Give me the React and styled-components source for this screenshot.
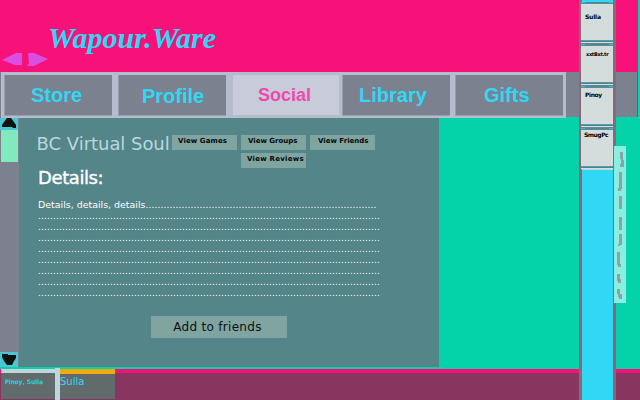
import React from "react";
import styled, { createGlobalStyle } from "styled-components";

const Global = createGlobalStyle`
  * { box-sizing: border-box; }
  body { margin: 0; background: #04d3aa; }
`;

const Screen = styled.div`
  position: relative;
  display: flex;
  flex-direction: column;
  width: 640px;
  height: 400px;
  overflow: hidden;
  background: #04d3aa;
  font-family: "DejaVu Sans", sans-serif;
  white-space: nowrap;
`;

const Header = styled.header`
  height: 72px;
  width: 638px;
  display: flex;
  align-items: flex-start;
  background: #f7127a;
`;

const Arrows = styled.svg`
  flex: none;
  width: 48px;
  height: 14px;
  margin-top: 52px;
`;

const Brand = styled.h1`
  margin: 21px 0 0;
  font: italic bold 30px/33px "Liberation Serif", serif;
  color: #31d8f5;
`;

const NavRow = styled.div`
  flex: none;
  display: flex;
  align-items: flex-start;
  height: 46px;
  padding-left: 1px;
  background: linear-gradient(90deg, #7b818f 1px, #04d3aa 1px);
`;

const Nav = styled.nav`
  width: 565px;
  height: 46px;
  padding: 3px 3px 2px;
  display: flex;
  background: #b4bcce;
`;

const NavEnd = styled.div`
  width: 72px;
  height: 45px;
  background: #7b818f;
  border-right: 1px solid #f7127a;
`;

const Tab = styled.a`
  flex: none;
  width: ${(p) => p.$w}px;
  height: ${(p) => (p.$active ? 40 : 41)}px;
  margin-right: ${(p) => p.$gap}px;
  padding: ${(p) => p.$top}px 0 0 ${(p) => p.$left}px;
  font: bold ${(p) => (p.$active ? 18 : 20)}px/22px "Liberation Sans", sans-serif;
  color: ${(p) => (p.$active ? "#f04aae" : "#31d8f5")};
  background: ${(p) => (p.$active ? "#c8ccda" : "#7b818f")};
  border: solid #979dac;
  border-width: ${(p) => (p.$active ? "0" : "0 0 1px 1px")};
`;

const Main = styled.main`
  flex: none;
  display: flex;
  height: 251px;
`;

const Scrollbar = styled.div`
  width: 19px;
  height: 249px;
  display: flex;
  flex-direction: column;
  justify-content: space-between;
  background: #7b818f;
`;

const ScrollButton = styled.svg`
  display: block;
  width: 18px;
  height: ${(p) => p.$h}px;
  background: #4ac6d2;
`;

const Thumb = styled.div`
  width: 17px;
  height: 32px;
  margin-left: 1px;
  background: #82e8bd;
`;

const Panel = styled.section`
  width: 420px;
  height: 249px;
  padding-left: 17px;
  background: #548588;
`;

const ProfileHead = styled.div`
  display: flex;
  height: 46px;
`;

const Name = styled.h2`
  width: 136px;
  margin: 15px 0 0;
  padding-left: 0.6px;
  font-size: 18px;
  line-height: 22px;
  font-weight: normal;
  letter-spacing: -0.04px;
  color: #b8d8df;
`;

const Actions = styled.div`
  display: grid;
  grid-template-columns: repeat(3, 65px);
  grid-auto-rows: 15px;
  gap: 3px 4px;
  padding-top: 17px;
`;

const Action = styled.button`
  grid-column: ${(p) => p.$col};
  padding: 0 0 2px ${(p) => p.$left}px;
  border: 0;
  background: #80a4a0;
  color: #050808;
  font: bold 7px/13px "DejaVu Sans", sans-serif;
  letter-spacing: ${(p) => p.$ls}px;
  text-align: left;
`;

const Heading = styled.h3`
  margin: 3px 0 0 2px;
  font-size: 18px;
  line-height: 22px;
  font-weight: normal;
  letter-spacing: -0.4px;
  -webkit-text-stroke: 0.4px #fff;
  color: #fff;
`;

const Details = styled.div`
  margin: 10px 0 0 2px;
  font-size: 9.43px;
  line-height: 11px;
  color: #fff;
`;

const Line = styled.div`
  height: 11px;
`;

const Dots = styled.span`
  font-size: 9px;
  letter-spacing: 0.139px;
`;

const AddButton = styled.button`
  display: block;
  width: 136px;
  height: 22px;
  margin: 18px 0 0 115px;
  padding: 0 3px 0 0;
  border: 0;
  background: #80a4a0;
  color: #0c1212;
  font: 12px/22px "DejaVu Sans", sans-serif;
  letter-spacing: 0.3px;
`;

const Taskbar = styled.footer`
  flex: none;
  display: flex;
  height: 31px;
  padding-left: 1px;
  background: linear-gradient(#f7127a 4px, #88355f 4px);
`;

const Task = styled.div`
  width: ${(p) => p.$w}px;
  height: 30px;
  padding-left: ${(p) => p.$left}px;
  border-top: ${(p) => p.$bar}px solid ${(p) => p.$color};
  background: #616b6b;
  color: #31d8f5;
  font-size: ${(p) => p.$size}px;
  line-height: ${(p) => p.$lh}px;
  letter-spacing: ${(p) => p.$ls}px;
  -webkit-text-stroke: ${(p) => p.$stroke}px #31d8f5;
`;

const Divider = styled.div`
  width: 5px;
  height: 32px;
  margin-top: -1px;
  background: #bdd5dc;
`;

const FriendRail = styled.aside`
  position: absolute;
  top: 0;
  left: 579px;
  width: 37px;
  height: 400px;
  padding-top: 2px;
  background: #31d8f5;
  border: solid #87697a;
  border-width: 0 3px 0 3px;
`;

const Friend = styled.div`
  height: 42px;
  margin-left: -1px;
  padding: ${(p) => p.$top}px 0 0 ${(p) => p.$left}px;
  font: bold ${(p) => p.$size}px/8px "DejaVu Sans", sans-serif;
  letter-spacing: ${(p) => p.$ls}px;
  color: #000;
  background:
    linear-gradient(#607f8c, #607f8c) 4px 0 / 24px 1px no-repeat,
    linear-gradient(
      #35bfd8 1px, #4f929f 1px 2px, #d4dddb 2px 38px, #38a9bd 38px 39px,
      #6f767f 39px 40px, #d4dddb 40px 41px, #5d8b98 41px
    );
`;

const RailEnd = styled.div`
  height: 1px;
  margin-top: -1px;
  background: #b9d9de;
`;

const SideTab = styled.svg`
  position: absolute;
  top: 146px;
  left: 614px;
  width: 12px;
  height: 157px;
  background: #8aeee2;
`;

const tabs = [
  { label: "Store", w: 108, gap: 6, left: 26, top: 9 },
  { label: "Profile", w: 108, gap: 7, left: 23, top: 10 },
  { label: "Social", w: 106, gap: 3, left: 25, top: 9, active: true },
  { label: "Library", w: 108, gap: 5, left: 16, top: 9 },
  { label: "Gifts", w: 108, gap: 0, left: 28, top: 9 },
];

const actions = [
  { label: "View Games", col: 1, left: 6, ls: 0.1 },
  { label: "View Groups", col: 2, left: 7, ls: 0 },
  { label: "View Friends", col: 3, left: 8, ls: 0 },
  { label: "View Reviews", col: 2, left: 6, ls: 0.25 },
];

const friends = [
  { name: "Sulla", size: 6, ls: -0.2, left: 4, top: 11 },
  { name: "xxtBxt.tr", size: 5, ls: -0.3, left: 5, top: 6 },
  { name: "Pinoy", size: 6, ls: -0.4, left: 4, top: 5 },
  { name: "SmugPc", size: 6, ls: -0.5, left: 3, top: 3 },
];

export default function App() {
  return (
    <Screen>
      <Global />
      <Header>
        <Arrows viewBox="0 0 48 14" fill="#d84fe2">
          <path d="M2 8 16 1h6v12H15Z" />
          <path d="M28 1h6l14 6-14 7h-7l2-3Z" />
        </Arrows>
        <Brand>Wapour.Ware</Brand>
      </Header>
      <NavRow>
        <Nav>
          {tabs.map((t) => (
            <Tab key={t.label} $w={t.w} $gap={t.gap} $left={t.left} $top={t.top} $active={t.active}>
              {t.label}
            </Tab>
          ))}
        </Nav>
        <NavEnd />
      </NavRow>
      <Main>
        <Scrollbar>
          <div>
            <ScrollButton $h={12} viewBox="0 0 18 12">
              <path d="M7 0h4l3 4 2 3v3h-3l-1-1H2V7l2-3Z" fill="#0d1213" />
            </ScrollButton>
            <Thumb />
          </div>
          <ScrollButton $h={15} viewBox="0 0 18 15">
            <path d="M2 2h6v1h8v3l-2 3-2 4H7L4 9 2 5Z" fill="#0d1213" />
          </ScrollButton>
        </Scrollbar>
        <Panel>
          <ProfileHead>
            <Name>BC Virtual Soul</Name>
            <Actions>
              {actions.map((a) => (
                <Action key={a.label} $col={a.col} $left={a.left} $ls={a.ls}>{a.label}</Action>
              ))}
            </Actions>
          </ProfileHead>
          <Heading>Details:</Heading>
          <Details>
            <Line>
              Details, details, details<Dots>{".".repeat(77)}</Dots>
            </Line>
            {Array.from({ length: 8 }, (_, i) => (
              <Line key={i}><Dots>{".".repeat(114)}</Dots></Line>
            ))}
          </Details>
          <AddButton>Add to friends</AddButton>
        </Panel>
      </Main>
      <Taskbar>
        <Task $w={54} $left={4} $bar={4} $color="#c0d6dc" $size={6} $lh={17} $ls={0.3} $stroke={0.25}>
          Pinoy, Sulla
        </Task>
        <Divider />
        <Task $w={55} $left={0} $bar={5} $color="#f3aa12" $size={10} $lh={16} $ls={0} $stroke={0}>
          Sulla
        </Task>
      </Taskbar>
      <FriendRail>
        {friends.map((f) => (
          <Friend key={f.name} $size={f.size} $ls={f.ls} $left={f.left} $top={f.top}>{f.name}</Friend>
        ))}
        <RailEnd />
      </FriendRail>
      <SideTab viewBox="0 0 12 157" fill="#86a6a2">
        <path d="M6 6h3v8h1v7H6v-3h1v-5H6ZM5 26h3v17H7v2H4v-3h1ZM5 50h3v13H5ZM5 71h3v13H5ZM5 88h3v11H6v1H4v-2h1ZM3 106h3v12h1v3H4v-2H3ZM3 128h3v5h1v4H4v-2H3ZM3 143h3v5h2v5H5v-2H4v-3H3Z" />
      </SideTab>
    </Screen>
  );
}
